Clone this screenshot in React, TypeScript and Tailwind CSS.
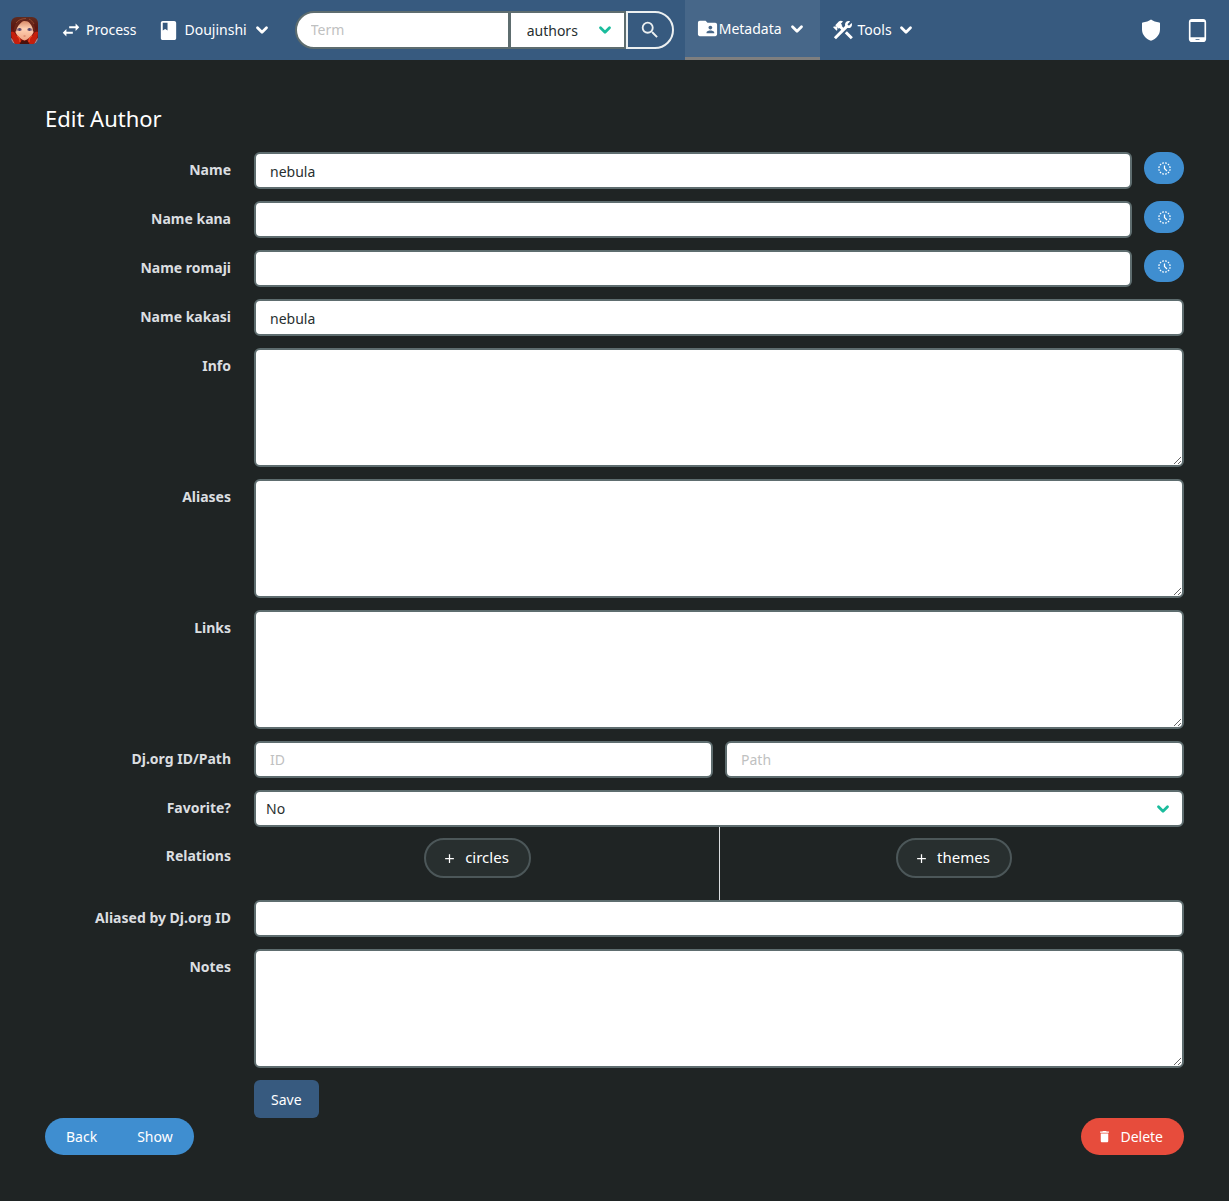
import type { ReactNode } from "react";
import {
  MdAdd,
  MdBook,
  MdDelete,
  MdFolderShared,
  MdHistoryToggleOff,
  MdSearch,
  MdSwapHoriz,
  MdTabletAndroid,
} from "react-icons/md";

const control =
  "block w-full rounded-md border-2 border-[#5e6d6f] bg-white text-sm text-[#282f2f] placeholder:text-[#bfc1c1] focus:outline-none focus:border-[#1abc9c]";
const textInput = control + " h-[37px] px-3.5";

function Chevron({ className }: { className: string }) {
  return (
    <svg viewBox="0 0 14 10" aria-hidden="true" className={"h-[10px] w-[14px] shrink-0 " + className}>
      <path d="M2.5 2.8 7 7.300l4.500-4.500" fill="none" stroke="currentColor" strokeWidth="2.800" strokeLinecap="round" strokeLinejoin="round" />
    </svg>
  );
}

function HammerWrench() {
  return (
    <svg viewBox="0 0 24 24" aria-hidden="true" className="size-6 shrink-0" fill="currentColor">
      <path d="M13.78 15.3L19.78 21.3L21.89 19.14L15.89 13.14L13.78 15.3M17.5 10.1C17.11 10.1 16.69 10.05 16.36 9.91L4.97 21.25L2.86 19.14L10.27 11.74L8.5 9.96L7.78 10.66L6.33 9.25V12.11L5.63 12.81L2.11 9.25L2.81 8.55H5.62L4.22 7.14L7.78 3.58C8.95 2.41 10.83 2.41 12 3.58L9.89 5.74L11.3 7.14L10.59 7.85L12.38 9.63L14.2 7.75C14.06 7.42 14 7 14 6.63C14 4.66 15.56 3.11 17.5 3.11C18.09 3.11 18.61 3.25 19.08 3.53L16.41 6.2L17.91 7.7L20.58 5.03C20.86 5.5 21 6 21 6.63C21 8.55 19.45 10.1 17.5 10.1Z" />
    </svg>
  );
}

function Shield() {
  return (
    <svg viewBox="0 0 18 22" aria-hidden="true" className="h-[22px] w-[18px]" fill="currentColor">
      <path d="M9 .5c2 1.500 5.200 2.700 8.300 3 .4 0 .7.300.7.700v6.300c0 5-3.700 9.600-9 11.200C3.700 20.100 0 15.500 0 10.500V4.200c0-.4.300-.7.700-.7C3.800 3.200 7 2 9 .5Z" />
    </svg>
  );
}

function Avatar() {
  return (
    <svg viewBox="0 0 27 27" role="img" aria-label="Home" className="size-[27px]">
      <defs>
        <clipPath id="avatar-clip">
          <rect width="27" height="27" rx="6" />
        </clipPath>
        <linearGradient id="avatar-hair" x1="0" y1="0" x2="0" y2="1">
          <stop offset="0" stopColor="#5f2c20" />
          <stop offset=".4" stopColor="#5c140f" />
          <stop offset="1" stopColor="#a81a0c" />
        </linearGradient>
        <linearGradient id="avatar-face" x1="0" y1="0" x2="0" y2="1">
          <stop offset="0" stopColor="#d98a68" />
          <stop offset=".4" stopColor="#ffd2b4" />
          <stop offset="1" stopColor="#f0a584" />
        </linearGradient>
      </defs>
      <g clipPath="url(#avatar-clip)">
        <rect width="27" height="27" fill="url(#avatar-hair)" />
        <path d="M0 21c2 1 3 3 4 6H0ZM27 21c-2 1-3 3-4 6h4Z" fill="#9b8f9a" />
        <path d="M4 12C4 7 8 4 13.500 4S23 7 23 12c0 5-4 9.500-9.500 11.500C8 21.500 4 17 4 12Z" fill="url(#avatar-face)" />
        <path d="M3 13C3 7 7 3 13 3c-2 2-5 4-7 8l-1 4ZM24 13c0-6-3-10-9-10 3 2 5 4 6.500 8l.5 4Z" fill="#69251a" />
        <ellipse cx="8.300" cy="12.500" rx="2.600" ry="1.500" fill="#9b7484" />
        <ellipse cx="18.700" cy="12.500" rx="2.600" ry="1.500" fill="#9b7484" />
        <ellipse cx="8.600" cy="12.500" rx="1.200" ry="1.400" fill="#51456a" />
        <ellipse cx="18.400" cy="12.500" rx="1.200" ry="1.400" fill="#51456a" />
        <path d="M12.600 19h1.900" stroke="#c4634c" strokeWidth=".8" />
        <path d="M0 15c3-1 4 1 5 3 2 1 4 3 5 6l0 3H4C2 24 0 19 0 15ZM27 15c-3-1-4 1-5 3-2 1-4 3-5 6v3h6c2-3 4-8 4-12Z" fill="#c51f0c" />
        <path d="M6 19c2 1 3 3 3 6M21 19c-2 1-3 3-3 6" fill="none" stroke="#ef4b25" strokeWidth="1.200" />
        <path d="m8.500 27 2.500-4 2.500 1 2.500-1 2.500 4Z" fill="#4a110c" />
        <path d="M5 6c2-3 6-4.500 10-4.500M18 2c2 1 4 3 5 5" fill="none" stroke="#96492f" strokeWidth="1" />
      </g>
    </svg>
  );
}

function Row({ label, htmlFor, children }: { label: string; htmlFor?: string; children: ReactNode }) {
  const labelClass = "pt-[7px] text-right text-sm leading-[22px] font-bold text-[#dbdee0]";
  return (
    <div className="grid grid-cols-[1fr_5fr] gap-x-[23px]">
      {htmlFor ? (
        <label htmlFor={htmlFor} className={labelClass}>{label}</label>
      ) : (
        <span className={labelClass}>{label}</span>
      )}
      <div className="min-w-0">{children}</div>
    </div>
  );
}

function TextRow({ label, id, value }: { label: string; id: string; value?: string }) {
  return (
    <Row label={label} htmlFor={id}>
      <input id={id} type="text" defaultValue={value} className={textInput + " pt-0.5"} />
    </Row>
  );
}

function HistoryRow({ label, id, value }: { label: string; id: string; value?: string }) {
  return (
    <Row label={label} htmlFor={id}>
      <div className="flex items-start gap-3">
        <input id={id} type="text" defaultValue={value} className={textInput + " pt-0.5"} />
        <button type="button" aria-label={label + " history"} className="flex h-8 w-10 shrink-0 items-center justify-center rounded-full bg-[#3f8ed0] text-white">
          <MdHistoryToggleOff className="size-[15px]" />
        </button>
      </div>
    </Row>
  );
}

function AreaRow({ label, id }: { label: string; id: string }) {
  return (
    <Row label={label} htmlFor={id}>
      <textarea id={id} className={control + " h-[119px] resize-y px-3.5 py-2"} />
    </Row>
  );
}

function RelationButton({ children }: { children: string }) {
  return (
    <button type="button" className="flex h-10 items-center gap-2 rounded-full border-2 border-[#4c5759] bg-[#282f2f] pr-5 pl-4 text-[15px] text-white">
      <MdAdd className="size-[15px]" />
      {children}
    </button>
  );
}

export default function App() {
  return (
    <div className="min-h-screen bg-[#1f2424] font-['Noto_Sans','Open_Sans',sans-serif] text-sm text-white">
      <nav aria-label="Main" className="flex h-[60px] items-center bg-[#375a7f]">
        <a href="#home" className="ml-[11px]"><Avatar /></a>
        <a href="#process" className="ml-[22px] flex items-center gap-1">
          <MdSwapHoriz className="size-[22px]" />
          Process
        </a>
        <a href="#doujinshi" className="ml-[21px] flex items-center gap-1">
          <MdBook className="size-[23px]" />
          Doujinshi
          <Chevron className="ml-1" />
        </a>
        <form className="ml-[26px] flex h-[38px]" onSubmit={(e) => e.preventDefault()}>
          <input type="text" aria-label="Term" placeholder="Term" className="w-[215px] rounded-l-full border-2 border-[#5e6d6f] bg-white px-3.5 text-[#282f2f] placeholder:text-[#bfc1c1]" />
          <div className="relative -ml-px w-[117px]">
            <select aria-label="Search in" className="size-full appearance-none border-2 border-[#5e6d6f] bg-white pt-0.5 pl-4 text-[#282f2f]">
              <option>authors</option>
              <option>circles</option>
            </select>
            <Chevron className="pointer-events-none absolute top-3.5 right-3.5 text-[#1abc9c]" />
          </div>
          <button type="submit" aria-label="Search" className="flex w-12 items-center justify-center rounded-r-full border-2 border-[#ecf0f1] text-[#ecf0f1]">
            <MdSearch className="size-[22px]" />
          </button>
        </form>
        <a href="#metadata" className="ml-[11px] flex h-full items-center border-b-3 border-[#7f7f7f] bg-[#476789] pr-4 pl-[11px]">
          <MdFolderShared className="size-[23px]" />
          Metadata
          <Chevron className="ml-2" />
        </a>
        <a href="#tools" className="ml-[11px] flex items-center gap-[3px]">
          <HammerWrench />
          Tools
          <Chevron className="ml-1" />
        </a>
        <div className="mr-5 ml-auto flex items-center gap-[26px]">
          <a href="#shield" aria-label="Security"><Shield /></a>
          <a href="#tablet" aria-label="Tablet view"><MdTabletAndroid className="size-[23px]" /></a>
        </div>
      </nav>

      <main className="px-[45px] pt-[43px] pb-[45px]">
        <h1 className="mb-[19px] text-[22px] leading-[30px]">Edit Author</h1>
        <form onSubmit={(e) => e.preventDefault()}>
          <div className="flex flex-col gap-3">
            <HistoryRow label="Name" id="name" value="nebula" />
            <HistoryRow label="Name kana" id="kana" />
            <HistoryRow label="Name romaji" id="romaji" />
            <TextRow label="Name kakasi" id="kakasi" value="nebula" />
            <AreaRow label="Info" id="info" />
            <AreaRow label="Aliases" id="aliases" />
            <AreaRow label="Links" id="links" />
            <Row label="Dj.org ID/Path" htmlFor="djid">
              <div className="grid grid-cols-2 gap-3">
                <input id="djid" type="text" placeholder="ID" className={textInput} />
                <input type="text" aria-label="Dj.org path" placeholder="Path" className={textInput} />
              </div>
            </Row>
            <Row label="Favorite?" htmlFor="favorite">
              <div className="relative">
                <select id="favorite" className={control + " h-[37px] appearance-none pl-2.5"}>
                  <option>No</option>
                  <option>Yes</option>
                </select>
                <Chevron className="pointer-events-none absolute top-3.5 right-3.5 text-[#1abc9c]" />
              </div>
            </Row>
          </div>
          <div className="grid grid-cols-[1fr_5fr] gap-x-[23px]">
            <span className="pt-[18px] text-right text-sm leading-[22px] font-bold text-[#dbdee0]">Relations</span>
            <div className="grid h-[73px] grid-cols-2">
              <div className="flex items-start justify-center pt-[11px] pr-[18px]">
                <RelationButton>circles</RelationButton>
              </div>
              <div className="flex items-start justify-center border-l border-[#dbdee0] pt-[11px] pl-1">
                <RelationButton>themes</RelationButton>
              </div>
            </div>
          </div>
          <div className="flex flex-col gap-3">
            <TextRow label="Aliased by Dj.org ID" id="aliased" />
            <AreaRow label="Notes" id="notes" />
            <Row label="">
              <button type="submit" className="h-[38px] rounded-md bg-[#375a7f] px-[17px] pt-0.5">Save</button>
            </Row>
          </div>
        </form>
        <div className="flex items-center justify-between">
          <div className="flex h-[37px] overflow-hidden rounded-full bg-[#3f8ed0]">
            <a href="#back" className="flex items-center pr-5 pl-[21px]">Back</a>
            <a href="#show" className="flex items-center pr-[21px] pl-5">Show</a>
          </div>
          <button type="button" className="flex h-[37px] items-center gap-2 rounded-full bg-[#e74c3c] pr-[21px] pl-4">
            <MdDelete className="size-[15px]" />
            Delete
          </button>
        </div>
      </main>
    </div>
  );
}
